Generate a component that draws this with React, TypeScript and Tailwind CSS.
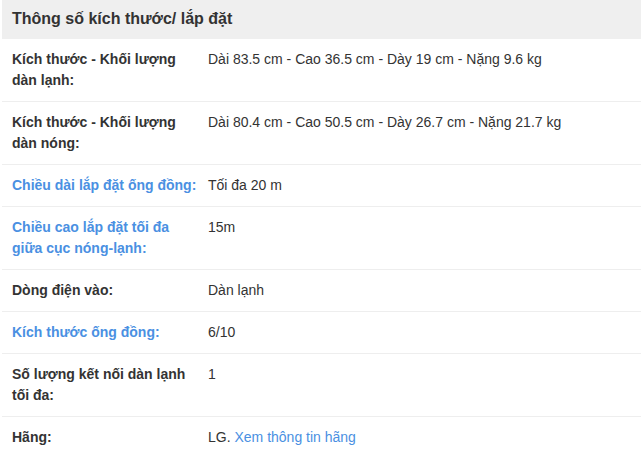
import React from "react";

type Row = { label: string; blue?: boolean; value: React.ReactNode };

const rows: Row[] = [
  { label: "Kích thước - Khối lượng dàn lạnh:", value: "Dài 83.5 cm - Cao 36.5 cm - Dày 19 cm - Nặng 9.6 kg" },
  { label: "Kích thước - Khối lượng dàn nóng:", value: "Dài 80.4 cm - Cao 50.5 cm - Dày 26.7 cm - Nặng 21.7 kg" },
  { label: "Chiều dài lắp đặt ống đồng:", blue: true, value: "Tối đa 20 m" },
  { label: "Chiều cao lắp đặt tối đa giữa cục nóng-lạnh:", blue: true, value: "15m" },
  { label: "Dòng điện vào:", value: "Dàn lạnh" },
  { label: "Kích thước ống đồng:", blue: true, value: "6/10" },
  { label: "Số lượng kết nối dàn lạnh tối đa:", value: "1" },
  {
    label: "Hãng:",
    value: (
      <>
        LG. <span className="text-[#4a90e2]">Xem thông tin hãng</span>
      </>
    ),
  },
];

export default function App() {
  return (
    <div
      className="w-[641px] h-[460px] overflow-hidden bg-white pl-[2px] text-[#333]"
      style={{ fontFamily: '"Liberation Sans", Arial, sans-serif' }}
    >
      <div className="bg-[#efefef] h-[39px] pl-[10px] pb-[1px] flex items-center text-[16px] font-bold text-[#333]">
        Thông số kích thước/ lắp đặt
      </div>
      {rows.map((r, i) => (
        <div
          key={i}
          className={`flex text-[14px] leading-[21px] py-[10px] ${i > 0 ? "border-t border-[#eeeeee]" : ""}`}
        >
          <div
            className={`w-[196px] shrink-0 pl-[10px] font-bold ${r.blue ? "text-[#4a90e2]" : "text-[#333]"}`}
          >
            {r.label}
          </div>
          <div className="pl-[10px] text-[#333]">{r.value}</div>
        </div>
      ))}
    </div>
  );
}
